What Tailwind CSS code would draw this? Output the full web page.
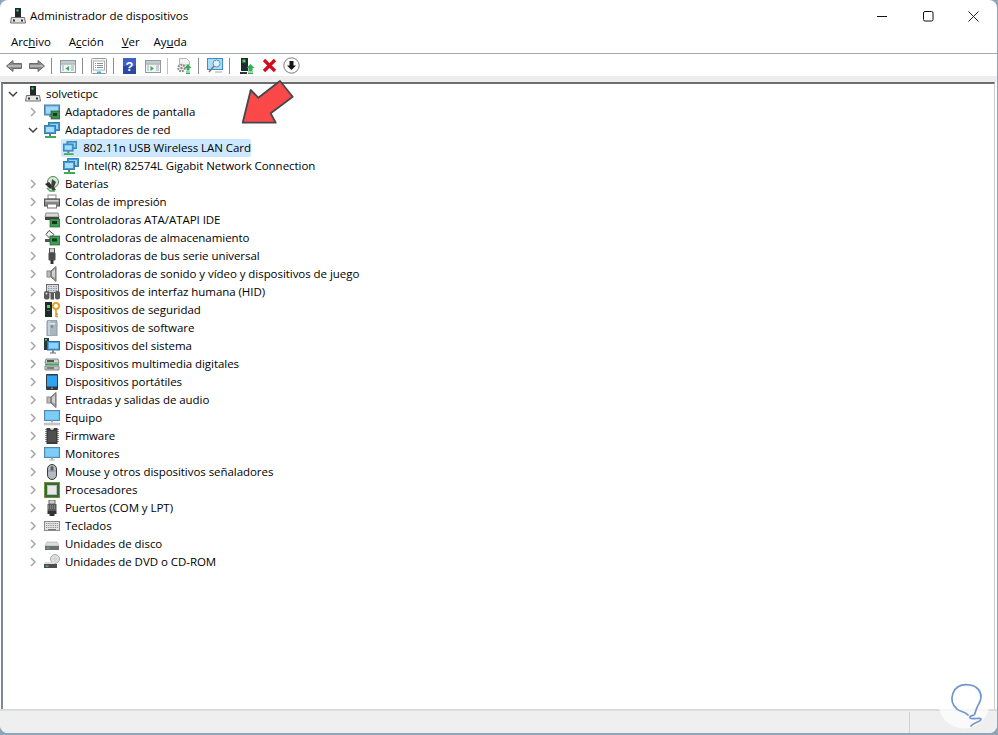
<!DOCTYPE html>
<html lang="es">
<head>
<meta charset="utf-8">
<title>Administrador de dispositivos</title>
<script src="https://cdn.jsdelivr.net/npm/@tailwindcss/browser@4"></script>
</head>
<body class="m-0 h-[735px] w-[998px] overflow-hidden whitespace-nowrap bg-[#8fa6b8] font-['Open_Sans','Noto_Sans',sans-serif] text-[11.5px] tracking-[-0.05px] text-black">
<svg class="hidden" width="0" height="0">
<defs>
<symbol id="chev" viewBox="0 0 10 10"><path d="M3 1l4 4-4 4" fill="none" stroke="#a6a6a6" stroke-width="1.5"/></symbol>
<symbol id="chevd" viewBox="0 0 10 10"><path d="M1 3l4 4 4-4" fill="none" stroke="#404040" stroke-width="1.5"/></symbol>
<symbol id="pc" viewBox="0 0 16 16"><rect x="5" y="0" width="6" height="9" fill="#1f2a2a"/><rect x="6.5" y="1.5" width="2" height="2" fill="#4fd06a"/><path d="M1.5 9.5h13l1 5.5H.5z" fill="#e4e4e4" stroke="#6e6e6e"/><rect x="3" y="11.5" width="2" height="2" fill="#333"/><rect x="11" y="11.5" width="2" height="2" fill="#333"/></symbol>
<symbol id="disp" viewBox="0 0 16 16"><rect x=".5" y="1" width="15" height="10" fill="#5aa9e6" stroke="#4f7fa0"/><rect x="2" y="2.5" width="12" height="7" fill="#9fd8f8"/><rect x="5" y="11" width="5" height="2" fill="#8a8a8a"/><rect x="7" y="7" width="9" height="8" fill="#3a8f4a" stroke="#2a5a30" stroke-width=".7"/><rect x="9" y="9" width="4" height="3" fill="#1d3b20"/></symbol>
<symbol id="net" viewBox="0 0 16 16"><rect x="4.5" y=".5" width="11" height="8" fill="#3f9be0" stroke="#3d7ea8"/><rect x="6" y="2" width="8" height="5" fill="#8fd2f7"/><rect x=".5" y="3.5" width="11" height="8" fill="#3f9be0" stroke="#3d7ea8"/><rect x="2" y="5" width="8" height="5" fill="#a8def9"/><rect x="5" y="11.5" width="2" height="2.5" fill="#777"/><path d="M1 15h11" stroke="#3ead50" stroke-width="2"/></symbol>
<symbol id="bat" viewBox="0 0 16 16"><circle cx="9" cy="6" r="5.5" fill="#d9e8d9" stroke="#3f8f4f"/><path d="M1 8l4-2 4 5-3 2z" fill="#2f2f2f"/><path d="M8 3l4 3-2 5 2 3-4 1-1-4z" fill="#404040"/><path d="M3 12l3 3h5" fill="none" stroke="#4aa85a" stroke-width="1.4"/></symbol>
<symbol id="print" viewBox="0 0 16 16"><rect x="4" y="1" width="8" height="4" fill="#fff" stroke="#888"/><rect x=".5" y="5" width="15" height="7" fill="#8a8a8a" stroke="#4e4e4e"/><rect x="1.5" y="6" width="13" height="1.6" fill="#d0d0d0"/><rect x="3.5" y="10" width="9" height="4" fill="#fff" stroke="#777"/></symbol>
<symbol id="ata" viewBox="0 0 16 16"><path d="M2 1h12l1 4H1z" fill="#d8d8d8" stroke="#8a8a8a"/><rect x="1" y="5" width="14" height="3" fill="#444"/><rect x="6" y="7" width="10" height="8" fill="#3a9f50" stroke="#2a5a30" stroke-width=".7"/><rect x="8" y="9" width="5" height="3" fill="#17361c"/></symbol>
<symbol id="store" viewBox="0 0 16 16"><path d="M5 .5l5 4-4 4-4-4z" fill="#f1f1f1" stroke="#555"/><rect x="1" y="9" width="8" height="3" fill="#555"/><rect x="6" y="6" width="10" height="9" fill="#3a9f50" stroke="#2a5a30" stroke-width=".7"/><rect x="8" y="8.5" width="5" height="3" fill="#17361c"/></symbol>
<symbol id="usb" viewBox="0 0 16 16"><rect x="5.5" y="0" width="5" height="5" fill="#d2d2d2" stroke="#555"/><rect x="4.5" y="4.5" width="7" height="8" rx="1" fill="#4c4c4c"/><rect x="6.5" y="12" width="3" height="4" fill="#333"/></symbol>
<symbol id="snd" viewBox="0 0 16 16"><rect x="3" y="5" width="4" height="6" fill="#bdbdbd" stroke="#8a8a8a"/><path d="M7 5l5-4.500v15L7 11z" fill="#9a9a9a" stroke="#6e6e6e"/><path d="M8 5.500l3-2.500v9l-3-2z" fill="#d0d0d0"/></symbol>
<symbol id="hid" viewBox="0 0 16 16"><rect x="2.500" y=".5" width="12" height="8" fill="#d9dee4" stroke="#6b6b6b"/><path d="M4 2.500h9M4 4.500h9M4 6.500h9" stroke="#8e98a2" stroke-dasharray="1.500 1"/><rect x="0" y="7" width="5.500" height="8.500" rx="2" fill="#5a5a5a"/><rect x="6.500" y="9" width="3.500" height="6.500" fill="#5a5a5a"/><rect x="11" y="7" width="5" height="8.500" rx="2" fill="#5a5a5a"/><circle cx="2.500" cy="9.500" r="1" fill="#ddd"/></symbol>
<symbol id="sec" viewBox="0 0 16 16"><rect x="1" y="0" width="7" height="15" fill="#1f2a2a"/><rect x="3" y="3" width="3" height="3" fill="#4fd06a"/><rect x="3" y="8" width="3" height="1" fill="#666"/><circle cx="12" cy="4" r="3" fill="none" stroke="#e0a52a" stroke-width="2"/><path d="M12 7v8M12 12h2M12 14.500h2" stroke="#d8951e" stroke-width="1.500"/></symbol>
<symbol id="soft" viewBox="0 0 16 16"><path d="M3 1l2-1h7l1 1v15H3z" fill="#a9b6c0" stroke="#8d98a2"/><rect x="5" y="3" width="6" height="1.500" fill="#e3e8ec"/><circle cx="8" cy="6.500" r="1.200" fill="#6e8193"/><rect x="4" y="1" width="2" height="14" fill="#c7d0d7"/></symbol>
<symbol id="sys" viewBox="0 0 16 16"><rect x="0" y="0" width="5" height="12" fill="#2a3a3a"/><rect x="1" y="1" width="2" height="1.500" fill="#4fd06a"/><rect x="3.500" y="3.500" width="12" height="8.500" fill="#4aa5e8" stroke="#2f6d9c"/><rect x="5" y="5" width="9" height="5.500" fill="#8fd2f7"/><path d="M6 15h6" stroke="#9a9a9a" stroke-width="1.500"/><rect x="8" y="12" width="2" height="3" fill="#8a8a8a"/></symbol>
<symbol id="mm" viewBox="0 0 16 16"><path d="M2 3h12l1 4H1z" fill="#d2d2d2" stroke="#888"/><path d="M3 5h7" stroke="#222" stroke-width="1.400"/><rect x="1" y="7.500" width="14" height="2" fill="#3ead50"/><path d="M1 10h14v4H1z" fill="#c8c8c8" stroke="#888"/><rect x="3" y="11.500" width="7" height="1" fill="#333"/></symbol>
<symbol id="port" viewBox="0 0 16 16"><rect x="2" y="0" width="12" height="16" rx="1" fill="#2f3a44"/><rect x="3" y="1.500" width="10" height="11" fill="#2fa5f2"/><rect x="7" y="13.500" width="2" height="1.500" fill="#888"/></symbol>
<symbol id="eq" viewBox="0 0 16 16"><rect x=".5" y=".5" width="15" height="10" fill="#5fbaf0" stroke="#4f8bb0"/><rect x="1.500" y="1.500" width="13" height="8" fill="#7fcdf7"/><rect x="7" y="10.500" width="2" height="2" fill="#b0b0b0"/><rect x="0" y="13" width="16" height="2" fill="#cfcfcf" stroke="#a8a8a8" stroke-width=".5"/></symbol>
<symbol id="fw" viewBox="0 0 16 16"><path d="M1 1.500h14M1 3.500h14M1 5.500h14M1 7.500h14M1 9.500h14M1 11.500h14M1 13.500h14" stroke="#8a8a8a"/><rect x="2.500" y="0" width="11" height="16" fill="#3b3b3b"/><circle cx="8" cy="0" r="2" fill="#dcdcdc"/><rect x="4" y="3" width="8" height="11" fill="#4f4f4f"/></symbol>
<symbol id="mon" viewBox="0 0 16 16"><rect x=".5" y="1.500" width="15" height="10" fill="#5fbaf0" stroke="#4f8bb0"/><rect x="1.500" y="2.500" width="13" height="8" fill="#7fcdf7"/><rect x="7" y="11.500" width="2" height="2" fill="#a0a0a0"/><path d="M5 14h6" stroke="#b5b5b5"/></symbol>
<symbol id="mouse" viewBox="0 0 16 16"><rect x="3.500" y=".5" width="9" height="15" rx="4.500" fill="#b5bac0" stroke="#3a3a3a"/><rect x="6.500" y="2" width="3" height="5" rx="1.500" fill="#5a6066"/><path d="M4 7h8" stroke="#8b9096"/></symbol>
<symbol id="cpu" viewBox="0 0 16 16"><rect x="0" y="0" width="16" height="16" fill="#2f6e35"/><rect x=".5" y=".5" width="15" height="15" fill="none" stroke="#c2a64a" stroke-dasharray="1 1"/><rect x="3.500" y="3.500" width="9" height="9" fill="#e8e8e8" stroke="#bbb"/></symbol>
<symbol id="com" viewBox="0 0 16 16"><rect x="5" y="0" width="6" height="4" fill="#cfcfcf" stroke="#666"/><rect x="3.500" y="4" width="9" height="7" fill="#5a5a5a"/><path d="M4 6h8M4 8h8" stroke="#aaa" stroke-dasharray="1 1"/><path d="M3.500 11h9v3h-2v2h-5v-2h-2z" fill="#333"/></symbol>
<symbol id="kb" viewBox="0 0 16 16"><rect x=".5" y="3.500" width="15" height="9" fill="#e4e4e4" stroke="#8a8a8a"/><path d="M2 5.500h12M2 7.500h12M2 9.500h12" stroke="#8f8f8f" stroke-dasharray="1 .8"/><path d="M4 11.500h8" stroke="#777"/></symbol>
<symbol id="disk" viewBox="0 0 16 16"><path d="M3 6h10l2 4H1z" fill="#dcdcdc" stroke="#a8a8a8" stroke-width=".6"/><rect x="1" y="10" width="14" height="4" fill="#6d6d6d"/><rect x="2.500" y="11.500" width="3" height="1.200" fill="#4fd06a"/></symbol>
<symbol id="dvd" viewBox="0 0 16 16"><circle cx="11" cy="5" r="4.500" fill="#dfdfdf" stroke="#a8a8a8"/><circle cx="11" cy="5" r="1.200" fill="#fff" stroke="#999" stroke-width=".5"/><path d="M1 8h9l1 2H0z" fill="#dcdcdc"/><rect x="0" y="10" width="13" height="4" fill="#4c4c4c"/><rect x="1.500" y="11.500" width="3" height="1.200" fill="#4fd06a"/></symbol>
</defs>
</svg>

<div class="relative flex h-[733px] w-[997px] flex-col overflow-hidden rounded-t-[8px] rounded-b-[8px] bg-white">
  <!-- title bar -->
  <header class="flex h-[30px] shrink-0 items-center pl-[10px] pt-[2px]">
    <svg class="h-4 w-4" viewBox="0 0 16 16"><use href="#pc"/></svg>
    <span class="ml-[4px] leading-none">Administrador de dispositivos</span>
    <div class="ml-auto flex items-center">
      <svg class="mr-[35px]" width="11" height="11" viewBox="0 0 11 11"><path d="M0 5.500h10" stroke="#111" stroke-width="1"/></svg>
      <svg class="mr-[34px]" width="11" height="11" viewBox="0 0 11 11"><rect x=".5" y=".5" width="9.500" height="9.500" rx="1.500" fill="none" stroke="#111"/></svg>
      <svg class="mr-[18px]" width="11" height="11" viewBox="0 0 11 11"><path d="M.5.500l10 10M10.500.500l-10 10" stroke="#222" stroke-width="1"/></svg>
    </div>
  </header>
  <!-- menu -->
  <nav class="flex h-[24px] shrink-0 items-center border-b border-[#a5a9b3] pl-[11px] leading-none">
    <span class="mr-[18px]">Arc<u class="underline">h</u>ivo</span>
    <span class="mr-[18px]">A<u class="underline">c</u>ción</span>
    <span class="mr-[14px]"><u class="underline">V</u>er</span>
    <span>Ay<u class="underline">u</u>da</span>
  </nav>
  <!-- toolbar -->
  <div class="flex h-[22px] shrink-0 items-center pl-[6px] pt-[1px]">
    <svg class="mr-[7px]" width="16" height="16" viewBox="0 0 16 16"><path d="M.5 8L7 2.500V5.500h8.500v5H7v3z" fill="#8a8a8a" stroke="#6a6a6a"/><path d="M2 8h13" stroke="#b5b5b5" stroke-width="2"/></svg>
    <svg class="mr-[6px]" width="16" height="16" viewBox="0 0 16 16"><path d="M15.500 8L9 2.500V5.500H.5v5H9v3z" fill="#8a8a8a" stroke="#6a6a6a"/><path d="M1 8h13" stroke="#b5b5b5" stroke-width="2"/></svg>
    <span class="mr-[8px] h-[16px] w-px bg-[#8c8c8c]"></span>
    <svg class="mr-[6px]" width="16" height="16" viewBox="0 0 16 16"><rect x=".5" y="2.500" width="15" height="12" fill="#f2f4f6" stroke="#8b9aa5"/><rect x="1" y="3" width="14" height="2.500" fill="#c3cbd1"/><path d="M1 6h14" stroke="#8b9aa5"/><path d="M9 8v5l-3.500-2.500z" fill="#2faf55"/><path d="M11 8h3M11 10h3M11 12h3M2 8h2M2 10h2M2 12h2" stroke="#9caab5"/></svg>
    <span class="mr-[8px] h-[16px] w-px bg-[#8c8c8c]"></span>
    <svg class="mr-[6px]" width="16" height="16" viewBox="0 0 16 16"><rect x=".5" y=".5" width="15" height="15" rx="1" fill="#f4f4f4" stroke="#9a9a9a"/><rect x="2.500" y="3" width="11" height="9" fill="#fff" stroke="#b0b0b0"/><path d="M4 5.500h1M6 5.500h6M4 7.500h1M6 7.500h6M4 9.500h1M6 9.500h6" stroke="#7b93a8"/><rect x="6" y="13.500" width="4" height="2" fill="#35b2ee"/></svg>
    <span class="mr-[9px] h-[16px] w-px bg-[#8c8c8c]"></span>
    <svg class="mr-[9px]" width="13" height="16" viewBox="0 0 13 16"><rect width="13" height="16" fill="#2b47a8"/><rect x="0" y="0" width="13" height="8" fill="#3f60c9"/><text x="6.500" y="13" text-anchor="middle" font-family="Liberation Sans" font-weight="700" font-size="13" fill="#fff">?</text></svg>
    <svg class="mr-[6px]" width="16" height="16" viewBox="0 0 16 16"><rect x=".5" y="2.500" width="15" height="12" fill="#f2f4f6" stroke="#8b9aa5"/><rect x="1" y="3" width="14" height="2.500" fill="#c3cbd1"/><path d="M1 6h14" stroke="#8b9aa5"/><path d="M5.500 8v5L9 10.500z" fill="#2faf55"/><path d="M11 8h3M11 10h3M11 12h3M2 8h2M2 10h2M2 12h2" stroke="#9caab5"/></svg>
    <span class="mr-[8px] h-[16px] w-px bg-[#c0c0c0]"></span>
    <svg class="mr-[6px]" width="16" height="16" viewBox="0 0 16 16"><path d="M3.500.500h7l3 3V7H3.500z" fill="#f3f3f3" stroke="#b5b5b5"/><circle cx="5.500" cy="10" r="3.300" fill="#eee" stroke="#8a8a8a" stroke-width="2" stroke-dasharray="1.800 1"/><circle cx="5.500" cy="10" r="1.200" fill="#8a8a8a"/><path d="M12 6l3.500 4H13.500v2.500h-3V10H8.500z" fill="#2fae55"/><path d="M10 14h4M10 15.500h4" stroke="#2fae55"/></svg>
    <span class="mr-[8px] h-[16px] w-px bg-[#8c8c8c]"></span>
    <svg class="mr-[6px]" width="16" height="16" viewBox="0 0 16 16"><rect x=".5" y=".5" width="15" height="11" fill="#a8def9" stroke="#3a8fc4"/><circle cx="9.500" cy="5.500" r="3.500" fill="#dff2fc" stroke="#6a8ea5"/><path d="M7 8l-5 6" stroke="#7a7a7a" stroke-width="1.500"/><path d="M8 14h7" stroke="#a8a8a8"/></svg>
    <span class="mr-[10px] h-[16px] w-px bg-[#8c8c8c]"></span>
    <svg class="mr-[7px]" width="15" height="16" viewBox="0 0 15 16"><rect x="1" y="0" width="7" height="13" fill="#1f2a2a"/><rect x="2.500" y="1.500" width="3" height="3" fill="#4fd06a"/><path d="M0 15h7" stroke="#333" stroke-width="2"/><path d="M10.500 6l4 4h-2v3h-4v-3h-2z" fill="#2fae55"/><path d="M8 14h5M8 15.500h5" stroke="#2fae55"/></svg>
    <svg class="mr-[6px]" width="15" height="15" viewBox="0 0 15 15"><path d="M2 2l11 11M13 2L2 13" stroke="#d9091c" stroke-width="3.200"/></svg>
    <svg width="17" height="17" viewBox="0 0 17 17"><circle cx="8.500" cy="8.500" r="7.700" fill="#fafafa" stroke="#7c7c7c"/><path d="M6.500 4h4v4.500h2.500l-4.500 4.500L4 8.500h2.500z" fill="#141414"/></svg>
  </div>
  <!-- gray strip -->
  <div class="h-[6px] shrink-0 bg-[#ededed]"></div>
  <!-- tree -->
  <main class="ml-px mr-[2px] min-h-0 flex-1 border-t-2 border-l-2 border-t-[#6d6d6d] border-l-[#7d8894] border-r border-r-[#c8ccd0] bg-white pt-px leading-[18px]">
    <ul>
      <li class="flex h-[18px] items-center"><svg class="ml-[5px] mr-[7px] h-[10px] w-[10px]" viewBox="0 0 10 10"><use href="#chevd"/></svg><svg class="h-4 w-4" viewBox="0 0 16 16"><use href="#pc"/></svg><span class="ml-[5px]">solveticpc</span></li>
      <li class="flex h-[18px] items-center pl-[25px]"><svg class="mr-[6px] h-[10px] w-[10px]" viewBox="0 0 10 10"><use href="#chev"/></svg><svg class="h-4 w-4" viewBox="0 0 16 16"><use href="#disp"/></svg><span class="ml-[5px]">Adaptadores de pantalla</span></li>
      <li class="flex h-[18px] items-center pl-[25px]"><svg class="mr-[6px] h-[10px] w-[10px]" viewBox="0 0 10 10"><use href="#chevd"/></svg><svg class="h-4 w-4" viewBox="0 0 16 16"><use href="#net"/></svg><span class="ml-[5px]">Adaptadores de red</span></li>
      <li class="flex h-[18px] items-center pl-[58px]"><div class="flex h-[18px] w-[190px] items-center rounded-[2px] bg-[#cce8ff] pl-[2px]"><svg class="h-4 w-4" viewBox="0 0 16 16"><use href="#net"/></svg><span class="ml-[6px]">802.11n USB Wireless LAN Card</span></div></li>
      <li class="flex h-[18px] items-center pl-[60px]"><svg class="h-4 w-4" viewBox="0 0 16 16"><use href="#net"/></svg><span class="ml-[5px]">Intel(R) 82574L Gigabit Network Connection</span></li>
      <li class="flex h-[18px] items-center pl-[25px]"><svg class="mr-[6px] h-[10px] w-[10px]" viewBox="0 0 10 10"><use href="#chev"/></svg><svg class="h-4 w-4" viewBox="0 0 16 16"><use href="#bat"/></svg><span class="ml-[5px]">Baterías</span></li>
      <li class="flex h-[18px] items-center pl-[25px]"><svg class="mr-[6px] h-[10px] w-[10px]" viewBox="0 0 10 10"><use href="#chev"/></svg><svg class="h-4 w-4" viewBox="0 0 16 16"><use href="#print"/></svg><span class="ml-[5px]">Colas de impresión</span></li>
      <li class="flex h-[18px] items-center pl-[25px]"><svg class="mr-[6px] h-[10px] w-[10px]" viewBox="0 0 10 10"><use href="#chev"/></svg><svg class="h-4 w-4" viewBox="0 0 16 16"><use href="#ata"/></svg><span class="ml-[5px]">Controladoras ATA/ATAPI IDE</span></li>
      <li class="flex h-[18px] items-center pl-[25px]"><svg class="mr-[6px] h-[10px] w-[10px]" viewBox="0 0 10 10"><use href="#chev"/></svg><svg class="h-4 w-4" viewBox="0 0 16 16"><use href="#store"/></svg><span class="ml-[5px]">Controladoras de almacenamiento</span></li>
      <li class="flex h-[18px] items-center pl-[25px]"><svg class="mr-[6px] h-[10px] w-[10px]" viewBox="0 0 10 10"><use href="#chev"/></svg><svg class="h-4 w-4" viewBox="0 0 16 16"><use href="#usb"/></svg><span class="ml-[5px]">Controladoras de bus serie universal</span></li>
      <li class="flex h-[18px] items-center pl-[25px]"><svg class="mr-[6px] h-[10px] w-[10px]" viewBox="0 0 10 10"><use href="#chev"/></svg><svg class="h-4 w-4" viewBox="0 0 16 16"><use href="#snd"/></svg><span class="ml-[5px]">Controladoras de sonido y vídeo y dispositivos de juego</span></li>
      <li class="flex h-[18px] items-center pl-[25px]"><svg class="mr-[6px] h-[10px] w-[10px]" viewBox="0 0 10 10"><use href="#chev"/></svg><svg class="h-4 w-4" viewBox="0 0 16 16"><use href="#hid"/></svg><span class="ml-[5px]">Dispositivos de interfaz humana (HID)</span></li>
      <li class="flex h-[18px] items-center pl-[25px]"><svg class="mr-[6px] h-[10px] w-[10px]" viewBox="0 0 10 10"><use href="#chev"/></svg><svg class="h-4 w-4" viewBox="0 0 16 16"><use href="#sec"/></svg><span class="ml-[5px]">Dispositivos de seguridad</span></li>
      <li class="flex h-[18px] items-center pl-[25px]"><svg class="mr-[6px] h-[10px] w-[10px]" viewBox="0 0 10 10"><use href="#chev"/></svg><svg class="h-4 w-4" viewBox="0 0 16 16"><use href="#soft"/></svg><span class="ml-[5px]">Dispositivos de software</span></li>
      <li class="flex h-[18px] items-center pl-[25px]"><svg class="mr-[6px] h-[10px] w-[10px]" viewBox="0 0 10 10"><use href="#chev"/></svg><svg class="h-4 w-4" viewBox="0 0 16 16"><use href="#sys"/></svg><span class="ml-[5px]">Dispositivos del sistema</span></li>
      <li class="flex h-[18px] items-center pl-[25px]"><svg class="mr-[6px] h-[10px] w-[10px]" viewBox="0 0 10 10"><use href="#chev"/></svg><svg class="h-4 w-4" viewBox="0 0 16 16"><use href="#mm"/></svg><span class="ml-[5px]">Dispositivos multimedia digitales</span></li>
      <li class="flex h-[18px] items-center pl-[25px]"><svg class="mr-[6px] h-[10px] w-[10px]" viewBox="0 0 10 10"><use href="#chev"/></svg><svg class="h-4 w-4" viewBox="0 0 16 16"><use href="#port"/></svg><span class="ml-[5px]">Dispositivos portátiles</span></li>
      <li class="flex h-[18px] items-center pl-[25px]"><svg class="mr-[6px] h-[10px] w-[10px]" viewBox="0 0 10 10"><use href="#chev"/></svg><svg class="h-4 w-4" viewBox="0 0 16 16"><use href="#snd"/></svg><span class="ml-[5px]">Entradas y salidas de audio</span></li>
      <li class="flex h-[18px] items-center pl-[25px]"><svg class="mr-[6px] h-[10px] w-[10px]" viewBox="0 0 10 10"><use href="#chev"/></svg><svg class="h-4 w-4" viewBox="0 0 16 16"><use href="#eq"/></svg><span class="ml-[5px]">Equipo</span></li>
      <li class="flex h-[18px] items-center pl-[25px]"><svg class="mr-[6px] h-[10px] w-[10px]" viewBox="0 0 10 10"><use href="#chev"/></svg><svg class="h-4 w-4" viewBox="0 0 16 16"><use href="#fw"/></svg><span class="ml-[5px]">Firmware</span></li>
      <li class="flex h-[18px] items-center pl-[25px]"><svg class="mr-[6px] h-[10px] w-[10px]" viewBox="0 0 10 10"><use href="#chev"/></svg><svg class="h-4 w-4" viewBox="0 0 16 16"><use href="#mon"/></svg><span class="ml-[5px]">Monitores</span></li>
      <li class="flex h-[18px] items-center pl-[25px]"><svg class="mr-[6px] h-[10px] w-[10px]" viewBox="0 0 10 10"><use href="#chev"/></svg><svg class="h-4 w-4" viewBox="0 0 16 16"><use href="#mouse"/></svg><span class="ml-[5px]">Mouse y otros dispositivos señaladores</span></li>
      <li class="flex h-[18px] items-center pl-[25px]"><svg class="mr-[6px] h-[10px] w-[10px]" viewBox="0 0 10 10"><use href="#chev"/></svg><svg class="h-4 w-4" viewBox="0 0 16 16"><use href="#cpu"/></svg><span class="ml-[5px]">Procesadores</span></li>
      <li class="flex h-[18px] items-center pl-[25px]"><svg class="mr-[6px] h-[10px] w-[10px]" viewBox="0 0 10 10"><use href="#chev"/></svg><svg class="h-4 w-4" viewBox="0 0 16 16"><use href="#com"/></svg><span class="ml-[5px]">Puertos (COM y LPT)</span></li>
      <li class="flex h-[18px] items-center pl-[25px]"><svg class="mr-[6px] h-[10px] w-[10px]" viewBox="0 0 10 10"><use href="#chev"/></svg><svg class="h-4 w-4" viewBox="0 0 16 16"><use href="#kb"/></svg><span class="ml-[5px]">Teclados</span></li>
      <li class="flex h-[18px] items-center pl-[25px]"><svg class="mr-[6px] h-[10px] w-[10px]" viewBox="0 0 10 10"><use href="#chev"/></svg><svg class="h-4 w-4" viewBox="0 0 16 16"><use href="#disk"/></svg><span class="ml-[5px]">Unidades de disco</span></li>
      <li class="flex h-[18px] items-center pl-[25px]"><svg class="mr-[6px] h-[10px] w-[10px]" viewBox="0 0 10 10"><use href="#chev"/></svg><svg class="h-4 w-4" viewBox="0 0 16 16"><use href="#dvd"/></svg><span class="ml-[5px]">Unidades de DVD o CD-ROM</span></li>
    </ul>
  </main>
  <!-- status bar -->
  <footer class="flex h-[24px] shrink-0 justify-end border-t-2 border-[#dcdcdc] bg-[#efefef]">
    <span class="mr-[87px] mt-[1px] h-[21px] w-px bg-[#d2d2d2]"></span>
  </footer>
  <!-- red arrow annotation -->
  <svg class="absolute left-[238px] top-[76px]" width="60" height="52" viewBox="238 76 60 52"><path d="M242.700 122.700L250.700 90l7.600 7.700L280 81l12.700 15.700-22 16.600 5 9.400z" fill="#fb4848" stroke="#44484c" stroke-width="1.800" stroke-linejoin="round"/></svg>
  <!-- watermark -->
  <svg class="absolute left-[938px] top-[677px]" width="52" height="52" viewBox="938 677 52 52"><circle cx="964" cy="703" r="25.500" fill="#fff" fill-opacity=".7"/><path d="M968 715c-3-4-8-3-11-6-5-4-6-10-4-16 3-7 10-9 17-8 7 1 11 6 11 12 0 5-4 9-5 13-1 3-1 4-2 5-2 1-5 1-4 3 2 2 10-1 11 1 1 2-8 4-10 7" fill="none" stroke="#6f96cf" stroke-width="1.700" stroke-linecap="round"/></svg>
</div>
</body>
</html>
